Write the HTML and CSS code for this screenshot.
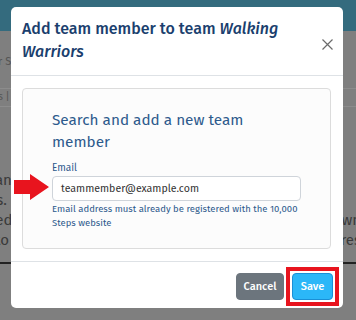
FILE: index.html
```html
<!DOCTYPE html>
<html>
<head>
<meta charset="utf-8">
<link rel="stylesheet" href="styles.css">
</head>
<body>
<div class="page">
  <div class="topbar"></div>
  <div class="bg-content">
    <div class="bg-filter">Enter S</div>
    <div class="bg-tabs">Steps | Team</div>
    <div class="bg-rows">
      <div class="bg-row"><span class="l">Plan</span><span class="r"></span></div>
      <div class="bg-row"><span class="l">rds.</span><span class="r"></span></div>
      <div class="bg-row"><span class="l">ated</span><span class="r">own</span></div>
      <div class="bg-row"><span class="l">d to</span><span class="r">res</span></div>
    </div>
    <div class="bg-rule"></div>
  </div>
</div>

<div class="modal">
  <div class="modal-header">
    <h1 class="modal-title">Add team member to team <em>Walking Warriors</em></h1>
    <button class="close" aria-label="Close">
      <svg width="11" height="11" viewBox="0 0 11 11"><path d="M0.5 0.5 L10.5 10.5 M10.5 0.5 L0.5 10.5" stroke="#6b6b6b" stroke-width="1.2" fill="none"/></svg>
    </button>
  </div>
  <div class="modal-body">
    <div class="card">
      <h2 class="card-title">Search and add a new team member</h2>
      <label class="label">Email</label>
      <div class="field">
        <svg class="arrow" width="36" height="26" viewBox="0 0 36 26"><path d="M0 6 H16 V0 L35 13 L16 26 V20 H0 Z" fill="#e8141e"/></svg>
        <div class="input">teammember@example.com</div>
      </div>
      <p class="help">Email address must already be registered with the 10,000 Steps website</p>
    </div>
  </div>
  <div class="modal-footer">
    <button class="btn btn-cancel">Cancel</button>
    <span class="highlight"><button class="btn btn-save">Save</button></span>
  </div>
</div>
</body>
</html>
```
FILE: styles.css
```css
* { box-sizing: border-box; }
html, body { margin: 0; padding: 0; }
body {
  width: 356px;
  height: 320px;
  overflow: hidden;
  background: #7f7f7f;
  font-family: "Fira Sans", "Roboto", "Noto Sans", sans-serif;
  position: relative;
}
.page { width: 356px; height: 320px; }
.topbar { height: 31px; background: #346b7e; }
.bg-content { color: #3a3a3a; }
.bg-filter { font-size: 11px; line-height: 14px; color: #555; padding-top: 24px; margin-left: -24px; height: 58px; border-bottom: 1px solid #8c8c8c; }
.bg-tabs { font-size: 10px; line-height: 16px; color: #555; margin-left: -22px; height: 18px; border-bottom: 1px solid #8c8c8c; }
.bg-rows { padding-top: 63px; }
.bg-row { display: flex; justify-content: space-between; font-size: 15px; line-height: 20px; margin-left: -18px; margin-right: -5px; }
.bg-rule { height: 2px; background: #222; margin-top: 12px; }

.modal {
  position: absolute;
  left: 11px;
  top: 7px;
  width: 332px;
  height: 301px;
  background: #fff;
  border-radius: 5px;
  display: flex;
  flex-direction: column;
}
.modal-header {
  height: 69px;
  border-bottom: 1px solid #dee2e6;
  display: flex;
  align-items: flex-start;
  padding: 10px 9px 0 11px;
}
.modal-title {
  margin: 0;
  flex: 1;
  font-size: 16px;
  line-height: 23px;
  font-weight: 500;
  color: #1b3f6e;
}
.modal-title em { font-style: italic; }
.close {
  border: 0;
  background: none;
  padding: 0;
  margin-top: 20px;
  width: 14px;
  height: 14px;
  display: flex;
  align-items: center;
  justify-content: center;
}
.modal-body { flex: 1; padding: 12px 12px 12px 11px; }
.card {
  height: 161px;
  background: #fcfcfc;
  border: 1px solid #dcdcdc;
  border-radius: 4px;
  padding: 20px 29px 0 29px;
}
.card-title {
  margin: 0 0 9px 0;
  max-width: 225px;
  font-size: 15.3px;
  line-height: 22px;
  font-weight: 400;
  color: #2d5a8c;
}
.label { display: block; font-size: 10px; line-height: 12px; color: #2d5a8c; margin-bottom: 2px; }
.field { position: relative; }
.arrow { position: absolute; left: -38px; top: -2px; }
.input {
  height: 25px;
  border: 1px solid #cfd4da;
  border-radius: 4px;
  background: #fff;
  font-size: 10.6px;
  line-height: 23px;
  padding-left: 8px;
  color: #333;
}
.help { margin: 1px 0 0 0; font-size: 9.5px; line-height: 14px; color: #2d5a8c; }
.modal-footer {
  height: 47px;
  border-top: 1px solid #dee2e6;
  display: flex;
  align-items: center;
  justify-content: flex-end;
  padding: 3px 4px 0 0;
  gap: 2px;
}
.btn {
  border-radius: 4px;
  font-family: inherit;
  font-size: 11px;
  font-weight: 500;
  color: #fff;
  height: 27px;
  padding: 0;
}
.btn-cancel { background: #6c757d; border: 1px solid #6c757d; width: 48px; }
.highlight { border: 4px solid #e8141e; padding: 2px; display: flex; }
.btn-save { background: #2bb7f8; border: 1px solid #1a8fd6; width: 41px; }
```
